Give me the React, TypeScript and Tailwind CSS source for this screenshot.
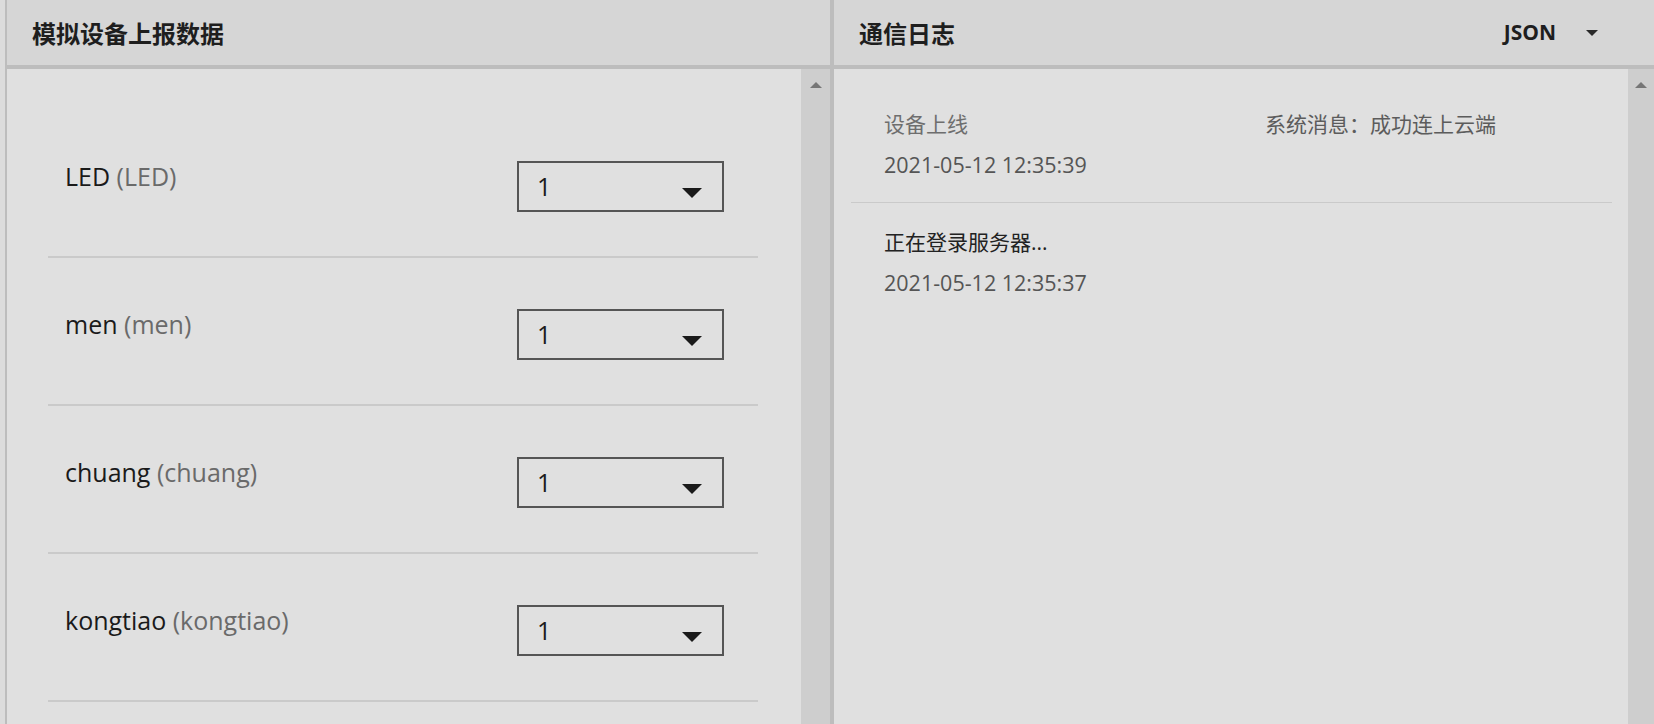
import React from 'react';

const ROWS = [
  { name: 'LED', id: 'LED' },
  { name: 'men', id: 'men' },
  { name: 'chuang', id: 'chuang' },
  { name: 'kongtiao', id: 'kongtiao' },
];

const LOGS = [
  { title: '设备上线', msg: '系统消息：成功连上云端', time: '2021-05-12 12:35:39', dim: true },
  { title: '正在登录服务器...', msg: '', time: '2021-05-12 12:35:37', dim: false },
];

const UpArrow: React.FC = () => (
  <svg width="12" height="6" viewBox="0 0 12 6" className="mx-auto">
    <path d="M0 6 L6 0 L12 6 Z" fill="#767676" />
  </svg>
);

const Scrollbar: React.FC<{ width: string }> = ({ width }) => (
  <div className={`${width} shrink-0 bg-[#cecece] pt-[13px]`}>
    <UpArrow />
  </div>
);

const Select: React.FC<{ value: string }> = ({ value }) => (
  <div className="w-[207px] h-[51px] border-2 border-[#555555] flex items-center justify-between pl-[18px] pr-[20px]">
    <span className="text-[25px] leading-none text-[#1c1c1c]">{value}</span>
    <svg width="20" height="10" viewBox="0 0 20 10" className="mt-[12px]">
      <path d="M0 0 H20 L10 10 Z" fill="#1a1a1a" />
    </svg>
  </div>
);

const App: React.FC = () => {
  return (
    <div className="h-[724px] w-[1654px] overflow-hidden bg-[#dcdcdc] pl-[5px] flex font-['Open_Sans','Noto_Sans_CJK_SC',sans-serif]">
      {/* left: simulated device data */}
      <div className="w-[829px] shrink-0 flex flex-col border-l-2 border-r-4 border-[#bdbdbd]">
        <div className="h-[69px] shrink-0 border-b-4 border-[#bdbdbd] bg-[#d6d6d6] px-[25px] flex items-center">
          <span className="text-[24px] font-bold text-[#1e1e1e] font-['Noto_Sans_CJK_SC',sans-serif]">模拟设备上报数据</span>
        </div>
        <div className="flex-1 min-h-0 flex bg-[#e0e0e0]">
          <div className="flex-1 pl-[41px] pr-[43px] pt-[41px]">
            {ROWS.map(r => (
              <div key={r.id} className="flex items-start justify-between pl-[17px] pr-[34px] pt-[51px] pb-[44px] border-b-2 border-[#cacaca]">
                <div className="mt-[3px] text-[25px] leading-none">
                  <span className="text-[#1a1a1a]">{r.name}</span>{' '}
                  <span className="text-[#6a6a6a]">({r.id})</span>
                </div>
                <Select value="1" />
              </div>
            ))}
          </div>
          <Scrollbar width="w-[29px]" />
        </div>
      </div>

      {/* right: communication log */}
      <div className="flex-1 flex flex-col">
        <div className="h-[69px] shrink-0 border-b-4 border-[#bdbdbd] bg-[#d6d6d6] pl-[25px] pr-[56px] flex items-center justify-between">
          <span className="text-[24px] font-bold text-[#1e1e1e] font-['Noto_Sans_CJK_SC',sans-serif]">通信日志</span>
          <div className="flex items-center gap-[30px]">
            <span className="text-[21px] font-bold text-[#1e1e1e]">JSON</span>
            <svg width="12" height="6" viewBox="0 0 12 6">
              <path d="M0 0 H12 L6 6 Z" fill="#2a2a2a" />
            </svg>
          </div>
        </div>
        <div className="flex-1 min-h-0 flex bg-[#e0e0e0]">
          <div className="flex-1 pl-[17px] pr-[16px] pt-[16px]">
            {LOGS.map((l, i) => (
              <div key={i} className={`px-[33px] pt-[24px] pb-[22px] ${i < LOGS.length - 1 ? 'border-b border-[#cacaca]' : ''}`}>
                <div className="flex text-[21px] leading-[30px]">
                  <span className={`w-[381px] shrink-0 ${l.dim ? 'text-[#6e6e6e]' : 'text-[#222222]'}`}>{l.title}</span>
                  <span className="text-[#5c5c5c]">{l.msg}</span>
                </div>
                <div className="mt-[11px] text-[21.5px] leading-[30px] text-[#555555]">{l.time}</div>
              </div>
            ))}
          </div>
          <Scrollbar width="w-[26px]" />
        </div>
      </div>
    </div>
  );
};

export default App;
